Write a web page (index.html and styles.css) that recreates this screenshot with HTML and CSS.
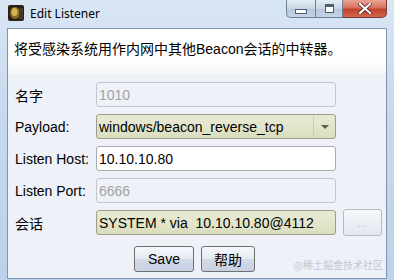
FILE: index.html
```html
<!DOCTYPE html>
<html>
  <head>
    <meta charset="utf-8">
    <link rel="stylesheet" href="styles.css">
  </head>

  <body>
    <div class="window">
      <div class="titlebar">
        <svg class="app-icon" width="16" height="16" viewBox="0 0 16 16">
          <rect width="16" height="16" rx="2" fill="#2a2016"/>
          <ellipse cx="7" cy="8" rx="5" ry="6" fill="#8a6a2a"/>
          <ellipse cx="6.5" cy="7" rx="3" ry="4" fill="#d8b450"/>
          <rect x="11" y="3" width="4" height="11" fill="#4a3a20"/>
        </svg>
        <span class="title">Edit Listener</span>
        <div class="caption">
          <div class="cap-btn cap-min"><span class="min-glyph"></span></div>
          <div class="cap-btn cap-max"><span class="max-glyph"></span></div>
          <div class="cap-btn cap-close">
            <svg width="14" height="11" viewBox="0 0 14 11">
              <path d="M2 1 L12 10 M12 1 L2 10" stroke="#4a2020" stroke-width="3.6" stroke-linecap="square"/>
              <path d="M2 1 L12 10 M12 1 L2 10" stroke="#ffffff" stroke-width="2.2" stroke-linecap="square"/>
            </svg>
          </div>
        </div>
      </div>

      <div class="client">
        <div class="desc">将受感染系统用作内网中其他Beacon会话的中转器。</div>

        <div class="form">
          <div class="row">
            <label class="lbl">名字</label>
            <div class="field disabled">1010</div>
          </div>
          <div class="row">
            <label class="lbl">Payload:</label>
            <div class="field combo">
              <span>windows/beacon_reverse_tcp</span>
              <span class="arrow"></span>
            </div>
          </div>
          <div class="row">
            <label class="lbl">Listen Host:</label>
            <div class="field">10.10.10.80</div>
          </div>
          <div class="row">
            <label class="lbl">Listen Port:</label>
            <div class="field disabled">6666</div>
          </div>
          <div class="row">
            <label class="lbl">会话</label>
            <div class="field combo">SYSTEM * via&nbsp; 10.10.10.80@4112</div>
            <button class="btn dots">...</button>
          </div>

          <div class="actions">
            <button class="btn save">Save</button>
            <button class="btn help">帮助</button>
          </div>
        </div>

        <span class="watermark">@稀土掘金技术社区</span>
      </div>
    </div>
  </body>
</html>
```

FILE: styles.css
```css
/* Window frame */
body {
margin: 0;
background: #ffffff;
}

.window {
width: 394px;
height: 280px;
box-sizing: border-box;
padding: 0 7px 0 7px;
background: linear-gradient(180deg, #d9e6f4 0%, #c8d9ee 40%, #bcd1ea 100%);
display: flex;
flex-direction: column;
font-family: "Liberation Sans", Arial, "Noto Sans CJK SC", sans-serif;
}

.titlebar {
height: 28px;
flex: none;
display: flex;
align-items: center;
position: relative;
}

.app-icon {
margin: 0 6px 2px 1px;
}

.title {
font-family: "Noto Sans", "Liberation Sans", sans-serif;
font-size: 12px;
color: #000000;
margin-bottom: 2px;
}

/* Caption buttons sit over the frame edge */
.caption {
position: absolute;
top: -1px;
right: 0;
display: flex;
}

.cap-btn {
height: 19px;
box-sizing: border-box;
border: 1px solid #6d7f97;
display: flex;
align-items: center;
justify-content: center;
}

.cap-min {
width: 29px;
border-radius: 0 0 0 5px;
border-right: none;
background: linear-gradient(180deg, #e4ecf6 0%, #c9d6e6 50%, #b7c7dc 51%, #c5d4e6 100%);
}

.cap-max {
width: 28px;
background: linear-gradient(180deg, #e4ecf6 0%, #c9d6e6 50%, #b7c7dc 51%, #c5d4e6 100%);
}

.cap-close {
width: 44px;
border-left: none;
border-radius: 0 0 5px 0;
border-color: #7a3a32;
background: linear-gradient(180deg, #e9a597 0%, #d8725f 45%, #c2432c 55%, #d0664e 100%);
}

.min-glyph {
width: 10px;
height: 3px;
margin-top: 6px;
border: 1px solid #4f5d70;
background: #ffffff;
}

.max-glyph {
width: 7px;
height: 5px;
border: 1px solid #4f5d70;
border-top-width: 3px;
background: #ffffff;
}

/* Client area */
.client {
flex: 1;
margin-bottom: 1px;
border: 1px solid #8194ad;
background: #eef1f7;
position: relative;
display: flex;
flex-direction: column;
}

.desc {
height: 45px;
box-sizing: border-box;
padding: 9px 0 0 6px;
background: linear-gradient(180deg, #ffffff 0%, #ffffff 70%, #f4f6f9 100%);
font-size: 14px;
color: #000000;
}

.form {
padding: 8px 0 0 7px;
display: flex;
flex-direction: column;
gap: 7px;
}

.row {
display: flex;
align-items: center;
height: 25px;
}

.lbl {
width: 81px;
flex: none;
font-size: 14px;
color: #000000;
}

.field {
width: 240px;
height: 25px;
box-sizing: border-box;
border: 1px solid #a9abaf;
border-radius: 3px;
background: #ffffff;
padding: 0 2px;
display: flex;
align-items: center;
font-size: 14px;
color: #000000;
}

.field.disabled {
border-color: #c3c6cb;
background: #eef1f7;
color: #a3a3a3;
}

.field.combo {
border-color: #9a9c8c;
background: linear-gradient(180deg, #e7ead4 0%, #e3e6cb 50%, #d9ddbd 100%);
justify-content: space-between;
}

.arrow {
width: 20px;
height: 21px;
box-sizing: border-box;
border-left: 1px solid #c9cbbb;
position: relative;
}

.arrow::after {
content: "";
position: absolute;
left: 7px;
top: 9px;
border-left: 4px solid transparent;
border-right: 4px solid transparent;
border-top: 4px solid #5a5a5a;
}

/* Buttons */
.btn {
height: 26px;
box-sizing: border-box;
border: 1px solid #707070;
border-radius: 3px;
background: linear-gradient(180deg, #f5f7fb 0%, #e6ebf3 48%, #d3dbe8 52%, #c7d1e2 100%);
font-family: "Liberation Sans", Arial, "Noto Sans CJK SC", sans-serif;
font-size: 14px;
color: #000000;
padding: 0;
}

.dots {
width: 39px;
height: 27px;
margin-left: 7px;
border-color: #b4bac6;
color: #b8bec8;
font-size: 11px;
background: linear-gradient(180deg, #f6f8fb 0%, #eceff5 50%, #e2e7ef 100%);
}

.actions {
display: flex;
justify-content: center;
gap: 7px;
margin-top: 4px;
padding-right: 12px;
}

.save {
width: 60px;
}

.help {
width: 54px;
}

/* Watermark overlay */
.watermark {
position: absolute;
right: 3px;
bottom: 6px;
font-family: "Noto Sans CJK SC", sans-serif;
font-size: 10px;
color: #c2c7d0;
}
```
